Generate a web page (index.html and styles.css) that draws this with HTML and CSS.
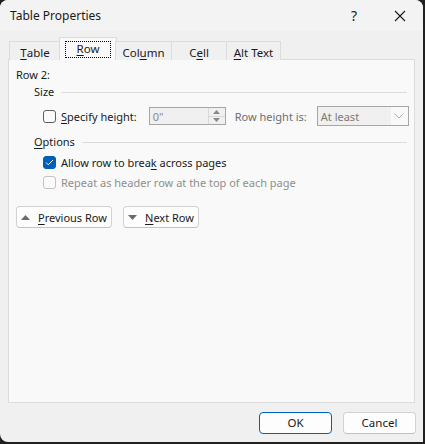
FILE: index.html
```html
<!DOCTYPE html>
<html>
<head>
<meta charset="utf-8">
<link rel="stylesheet" href="styles.css">
</head>
<body>
<div class="window">
  <div class="titlebar">
    <div class="title">Table Properties</div>
    <div class="tb-btn help">?</div>
    <div class="tb-btn close">
      <svg width="12" height="12" viewBox="0 0 12 12"><path d="M1 1L11 11M11 1L1 11" stroke="#1a1a1a" stroke-width="1.1" fill="none"/></svg>
    </div>
  </div>
  <div class="tabs">
    <div class="tab w-table"><u>T</u>able</div>
    <div class="tab sel w-row"><span class="focus"><u>R</u>ow</span></div>
    <div class="tab w-col">Col<u>u</u>mn</div>
    <div class="tab w-cell">C<u>e</u>ll</div>
    <div class="tab w-alt"><u>A</u>lt Text</div>
  </div>
  <div class="panel">
    <div class="rowlabel">Row 2:</div>
    <div class="group"><span>Size</span><div class="rule"></div></div>
    <div class="sizerow">
      <span class="cb"></span>
      <span class="lbl"><u>S</u>pecify height:</span>
      <div class="spin">
        <span class="spin-val">0"</span>
        <div class="spin-btns">
          <div class="sb"><svg width="7" height="4" viewBox="0 0 7 4"><path d="M0 4L3.5 0L7 4Z" fill="#888"/></svg></div>
          <div class="sb"><svg width="7" height="4" viewBox="0 0 7 4"><path d="M0 0L3.5 4L7 0Z" fill="#888"/></svg></div>
        </div>
      </div>
      <span class="lbl dim">Row height is:</span>
      <div class="select">
        <span class="sel-val">At least</span>
        <div class="sel-arrow"><svg width="10" height="6" viewBox="0 0 10 6"><path d="M0.5 0.5L5 5L9.5 0.5" stroke="#b0b0b0" fill="none"/></svg></div>
      </div>
    </div>
    <div class="group g2"><span><u>O</u>ptions</span><div class="rule"></div></div>
    <div class="opt">
      <span class="cb checked"><svg width="9" height="7" viewBox="0 0 9 7"><path d="M1 3.5L3.3 5.8L8 1" stroke="#fff" stroke-width="1" fill="none"/></svg></span>
      <span>Allow row to brea<u>k</u> across pages</span>
    </div>
    <div class="opt disabled">
      <span class="cb dis"></span>
      <span>Repeat as header row at the top of each page</span>
    </div>
    <div class="navbtns">
      <div class="btn prev"><svg width="9" height="5" viewBox="0 0 9 5"><path d="M0 5L4.5 0L9 5Z" fill="#6b6b6b"/></svg><span><u>P</u>revious Row</span></div>
      <div class="btn next"><svg width="9" height="5" viewBox="0 0 9 5"><path d="M0 0L4.5 5L9 0Z" fill="#6b6b6b"/></svg><span><u>N</u>ext Row</span></div>
    </div>
  </div>
  <div class="footer">
    <div class="btn ok">OK</div>
    <div class="btn cancel">Cancel</div>
  </div>
</div>
</body>
</html>
```
FILE: styles.css
```css
html, body {
  margin: 0;
  padding: 0;
  background: #202020;
  height: 444px;
  overflow: hidden;
}
body {
  font-family: "Noto Sans", "Open Sans", sans-serif;
  font-size: 11px;
  color: #1a1a1a;
  white-space: nowrap;
}
u { text-decoration-thickness: 1px; text-underline-offset: 2px; }
.window {
  width: 423px;
  height: 442px;
  background: #f0f0f0;
  border-radius: 8px 8px 0 8px;
  display: flex;
  flex-direction: column;
  overflow: hidden;
}
.titlebar {
  height: 31px;
  background: #f3f3f3;
  display: flex;
  align-items: center;
  flex-shrink: 0;
}
.title {
  flex: 1;
  padding-left: 10px;
  font-size: 12px;
  padding-bottom: 1px;
}
.tb-btn {
  width: 46px;
  height: 31px;
  display: flex;
  align-items: center;
  justify-content: center;
}
.help { font-size: 14px; }
.tabs {
  display: flex;
  align-items: flex-end;
  margin: 7px 0 0 9px;
  height: 22px;
  position: relative;
  z-index: 1;
  margin-bottom: -1px;
  font-size: 11.5px;
}
.tab {
  height: 19px;
  box-sizing: border-box;
  border: 1px solid #dcdcdc;
  border-bottom: none;
  margin-right: -1px;
  display: flex;
  align-items: center;
  justify-content: center;
  padding-top: 2px;
  background: #f0f0f0;
}
.w-table { width: 52px; }
.w-col { width: 57px; }
.w-cell { width: 56px; }
.w-alt { width: 55px; }
.tab.sel {
  height: 23px;
  background: #f9f9f9;
  padding-top: 0;
  margin-left: -1px;
  margin-right: -2px;
  width: 58px;
}
.focus {
  border: 1px dotted #000;
  width: 44px;
  height: 14px;
  display: flex;
  align-items: center;
  justify-content: center;
  padding-bottom: 1px;
}
.panel {
  flex: 1;
  margin: 0 8px;
  background: #f9f9f9;
  border: 1px solid #dcdcdc;
  padding: 0 7px;
}
.rowlabel {
  margin-top: 7px;
  height: 16px;
  line-height: 16px;
}
.group {
  display: flex;
  align-items: center;
  margin-left: 18px;
  height: 16px;
  line-height: 16px;
  margin-top: 1px;
}
.group .rule {
  flex: 1;
  height: 1px;
  background: #dcdcdc;
  margin-left: 7px;
}
.g2 { margin-top: 8px; }
.sizerow {
  display: flex;
  align-items: center;
  height: 20px;
  margin-top: 6px;
  padding-left: 27px;
}
.cb {
  width: 13px;
  height: 13px;
  box-sizing: border-box;
  border: 1px solid #5f5f5f;
  border-radius: 3px;
  background: #fbfbfb;
  display: inline-flex;
  align-items: center;
  justify-content: center;
  flex-shrink: 0;
  margin-right: 5px;
}
.cb.checked { background: #005fb8; border-color: #005fb8; }
.cb.dis { border-color: #c4c4c4; }
.lbl { flex-shrink: 0; }
.spin {
  margin-left: 12px;
  width: 77px;
  height: 18px;
  flex-shrink: 0;
  box-sizing: border-box;
  border: 1px solid #a6a6a6;
  background: #f0f0f0;
  display: flex;
  align-items: center;
}
.spin-val { flex: 1; color: #8a8a8a; padding-left: 3px; }
.spin-btns {
  width: 16px;
  height: 16px;
  display: flex;
  flex-direction: column;
  border-left: 1px solid #d8d8d8;
}
.sb {
  flex: 1;
  display: flex;
  align-items: center;
  justify-content: center;
  background: #f0f0f0;
}
.sb + .sb { border-top: 1px solid #d8d8d8; }
.dim { color: #6e6e6e; margin-left: 9px; }
.select {
  margin-left: 10px;
  width: 92px;
  height: 20px;
  flex-shrink: 0;
  box-sizing: border-box;
  border: 1px solid #a6a6a6;
  background: #f0f0f0;
  display: flex;
  align-items: center;
}
.sel-val { flex: 1; color: #7a7a7a; padding-left: 3px; }
.sel-arrow {
  width: 17px;
  height: 18px;
  background: #f9f9f9;
  display: flex;
  align-items: center;
  justify-content: center;
}
.opt {
  display: flex;
  align-items: center;
  height: 16px;
  padding-left: 27px;
  margin-top: 4px;
}
.opt.disabled { color: #8f8f8f; }
.navbtns {
  display: flex;
  gap: 11px;
  margin-top: 16px;
}
.btn {
  height: 22px;
  box-sizing: border-box;
  border: 1px solid #d2d2d2;
  border-bottom-color: #c2c2c2;
  border-radius: 4px;
  background: #fdfdfd;
  display: flex;
  align-items: center;
}
.prev { width: 96px; padding-left: 4px; }
.next { width: 76px; padding-left: 4px; }
.btn svg { margin-right: 8px; }
.footer {
  height: 39px;
  flex-shrink: 0;
  display: flex;
  justify-content: flex-end;
  align-items: center;
  gap: 11px;
  padding-right: 7px;
  font-size: 11.5px;
}
.ok, .cancel {
  width: 73px;
  justify-content: center;
}
.ok { border-color: #005fb8; }
```
